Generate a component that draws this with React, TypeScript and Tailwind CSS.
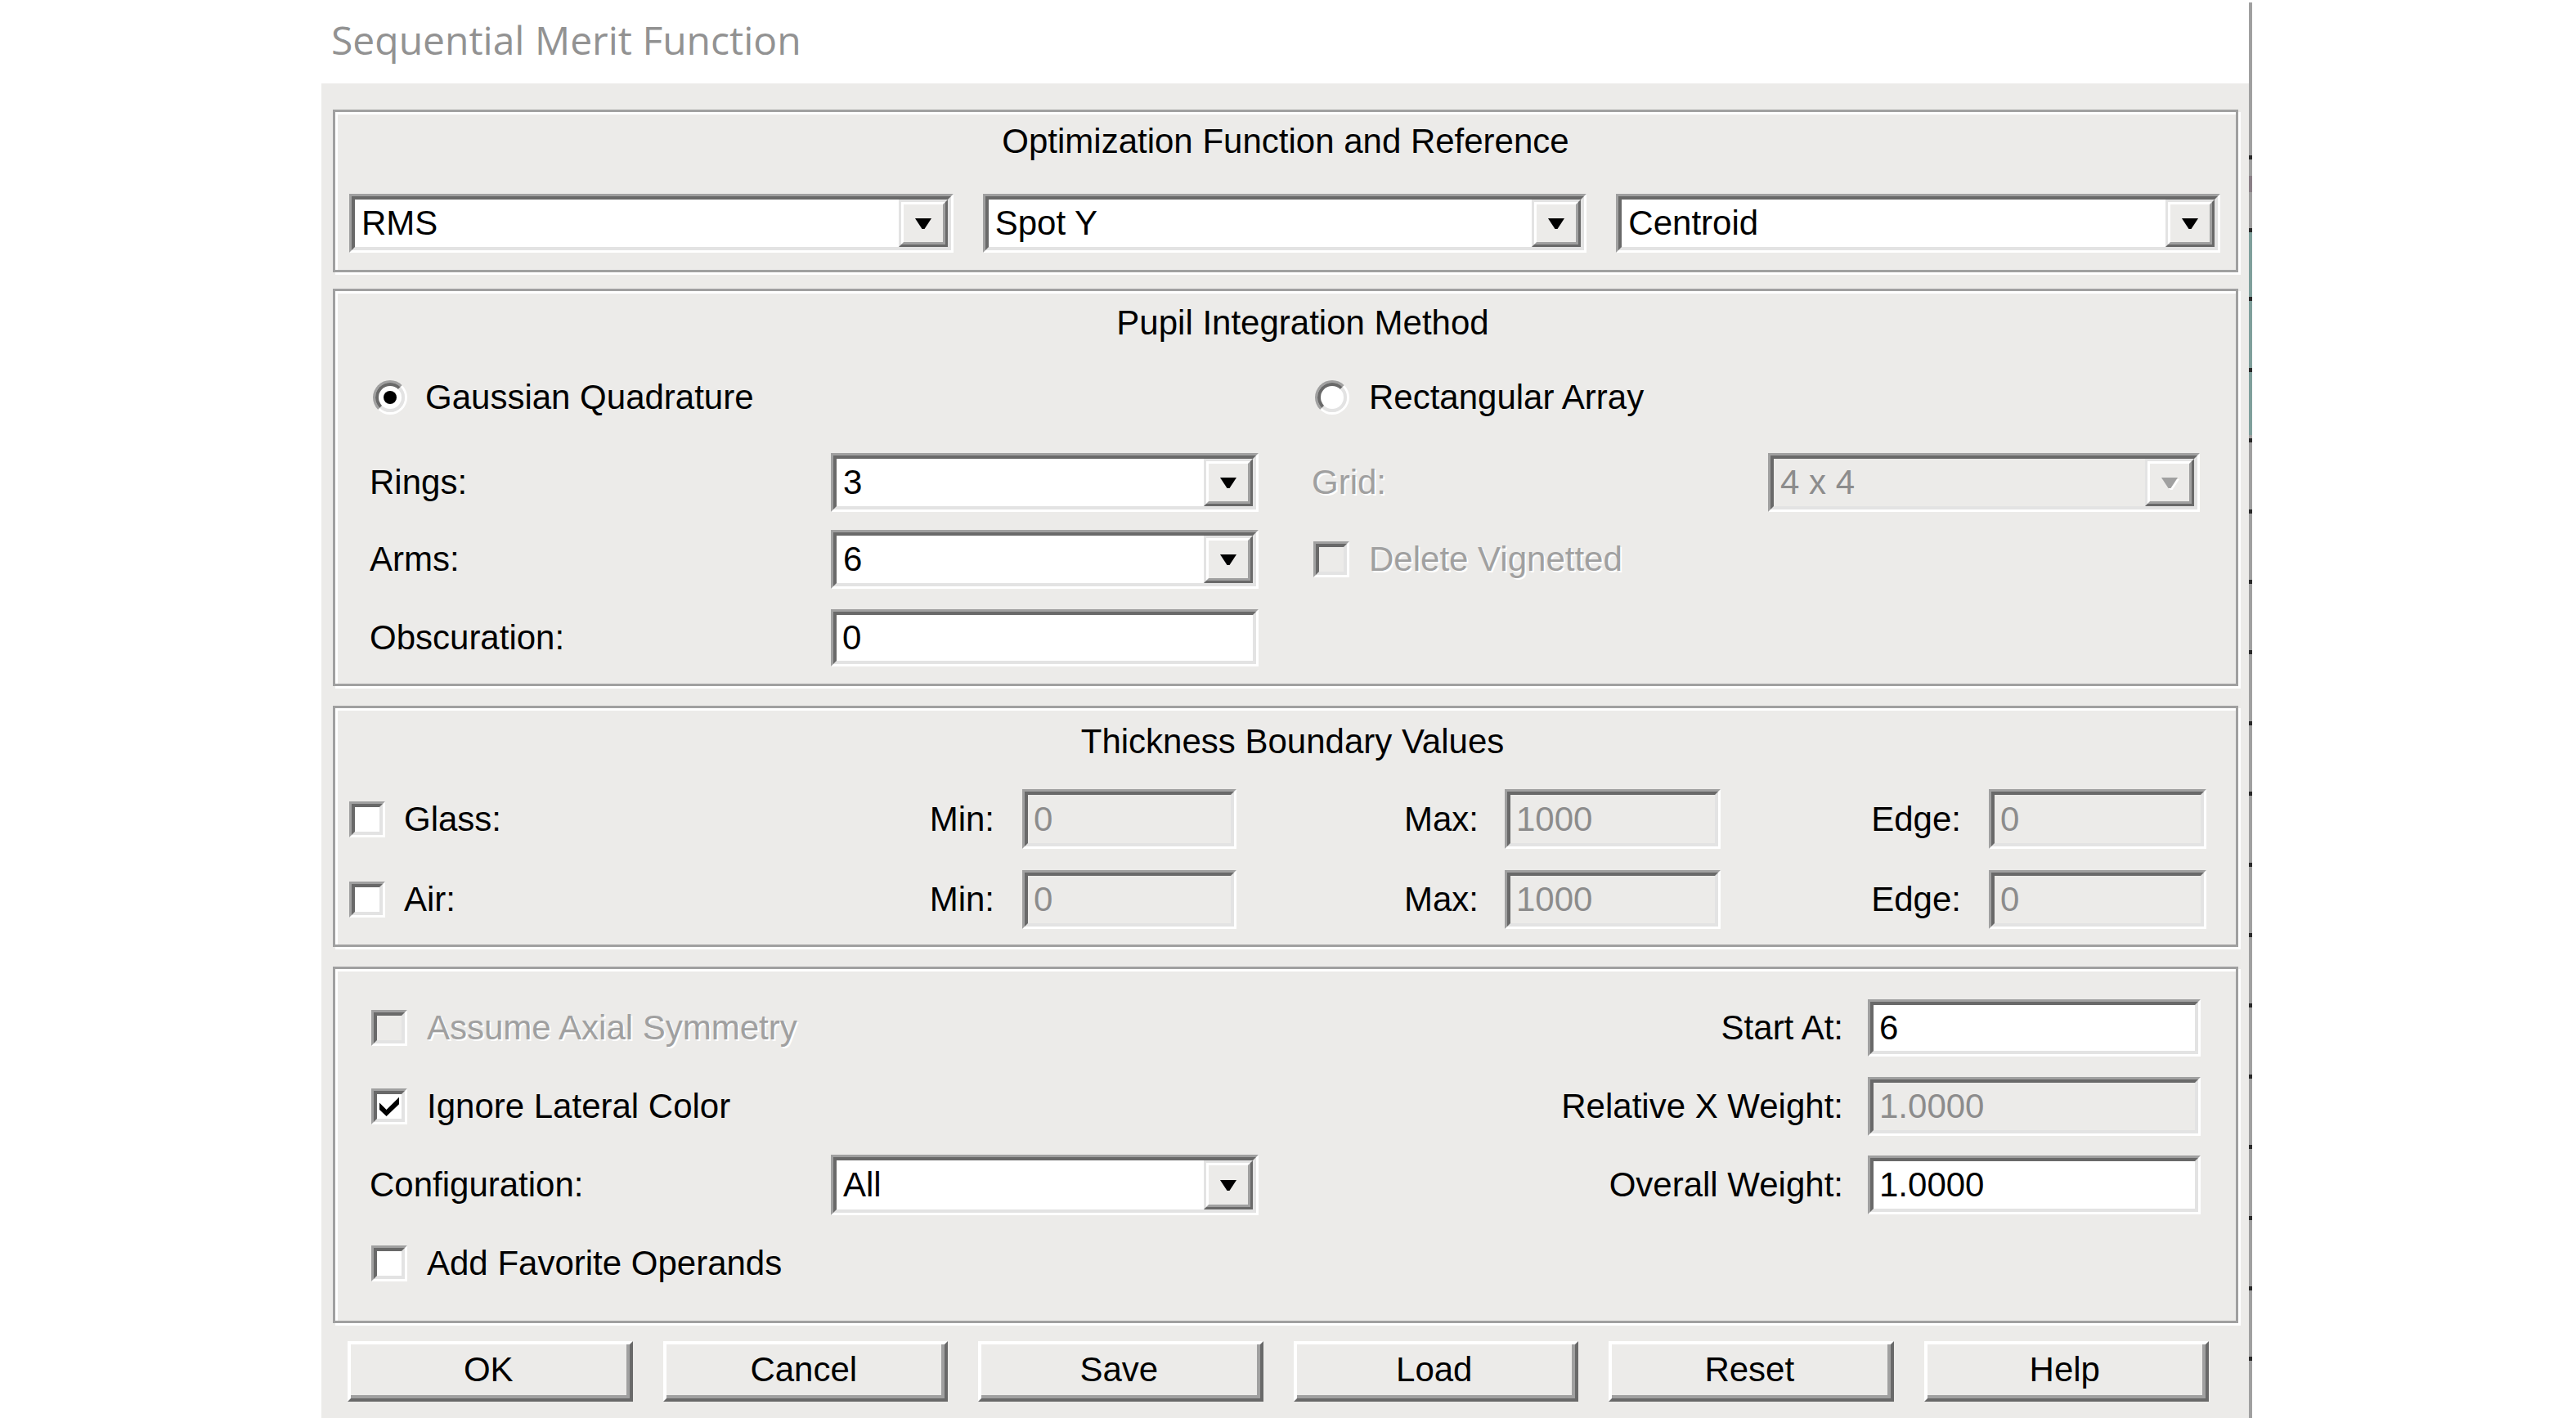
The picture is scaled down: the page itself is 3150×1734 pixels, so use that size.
import React from 'react';

const SUNKEN_OUT = 'border-[3px] border-t-[#a0a0a0] border-l-[#a0a0a0] border-b-white border-r-white';
const SUNKEN_IN = 'border-[4px] border-t-[#696969] border-l-[#696969] border-b-[#e3e3e3] border-r-[#e3e3e3]';
const DIS = 'text-[#a0a0a0] [text-shadow:2px_2px_0_#fff]';

function Arrow({ disabled }: { disabled?: boolean }) {
  return (
    <svg width="20" height="13" viewBox="0 0 20 13" className={disabled ? 'drop-shadow-[2px_2px_0_#fff]' : ''}>
      <polygon points="0,0 20,0 11.5,13 8.5,13" fill={disabled ? '#a0a0a0' : '#000'} />
    </svg>
  );
}

function Combo({ value, disabled, className = '' }: { value: string; disabled?: boolean; className?: string }) {
  return (
    <div className={`${SUNKEN_OUT} ${className}`}>
      <div className={`${SUNKEN_IN} h-full w-full flex ${disabled ? 'bg-[#ecebe9]' : 'bg-white'}`}>
        <div className={`flex-1 flex items-center pl-[8px] ${disabled ? 'text-[#8c8c8c]' : ''}`}>{value}</div>
        <div className="h-full w-[60px] border-[3px] border-t-[#e3e3e3] border-l-[#e3e3e3] border-b-[#696969] border-r-[#696969]">
          <div className="h-full w-full border-[3px] border-t-white border-l-white border-b-[#a0a0a0] border-r-[#a0a0a0] bg-[#ecebe9] flex items-center justify-center">
            <Arrow disabled={disabled} />
          </div>
        </div>
      </div>
    </div>
  );
}

function Edit({ value, disabled, className = '' }: { value: string; disabled?: boolean; className?: string }) {
  return (
    <div className={`${SUNKEN_OUT} ${className}`}>
      <div className={`${SUNKEN_IN} h-full w-full flex items-center pl-[7px] ${disabled ? 'bg-[#ecebe9] text-[#8c8c8c]' : 'bg-white'}`}>
        {value}
      </div>
    </div>
  );
}

function Radio({ checked }: { checked?: boolean }) {
  return (
    <div className="w-[42px] h-[42px] shrink-0 rounded-full border-[3px] border-t-[#a0a0a0] border-l-[#a0a0a0] border-r-white border-b-white">
      <div className="w-full h-full rounded-full border-[4px] border-t-[#696969] border-l-[#696969] border-r-[#e3e3e3] border-b-[#e3e3e3] bg-white flex items-center justify-center">
        {checked && <div className="w-[16px] h-[16px] rounded-full bg-black" />}
      </div>
    </div>
  );
}

function Check({ checked, disabled }: { checked?: boolean; disabled?: boolean }) {
  return (
    <div className={`w-[44px] h-[44px] shrink-0 ${SUNKEN_OUT}`}>
      <div className={`w-full h-full ${SUNKEN_IN} flex items-center justify-center ${disabled ? 'bg-[#ecebe9]' : 'bg-white'}`}>
        {checked && (
          <svg width="24" height="24" viewBox="0 0 7 7">
            <polygon points="0,2.2 2.5,4.7 7,0.2 7,2.7 2.5,7 0,4.7" fill="#000" />
          </svg>
        )}
      </div>
    </div>
  );
}

function Group({ title, className = '', children }: { title?: string; className?: string; children: React.ReactNode }) {
  return (
    <div className={`border-[3px] border-[#a0a0a0] shadow-[inset_3px_3px_0_#fff,3px_3px_0_#fff] flex flex-col ${className}`}>
      {title && <div className="text-center h-[42px] flex items-center justify-center">{title}</div>}
      {children}
    </div>
  );
}

function Button({ label }: { label: string }) {
  return (
    <div className="h-[74px] border-[4px] border-t-white border-l-white border-b-[#696969] border-r-[#696969]">
      <div className="h-full w-full border-b-[4px] border-r-[4px] border-b-[#a0a0a0] border-r-[#a0a0a0] bg-[#ecebe9] flex items-center justify-center">
        {label}
      </div>
    </div>
  );
}

const ticks = [187, 276, 360, 447, 533, 620, 706, 792, 879, 965, 1052, 1138, 1224, 1311, 1397, 1484, 1570, 1656];

export default function App() {
  return (
    <div className="w-[3150px] h-[1734px] bg-white flex overflow-hidden font-['Liberation_Sans',Arial,sans-serif] text-[42px] leading-none text-black">
      <div className="ml-[393px] w-[2357px] flex flex-col">
        <div className="h-[102px] flex items-center pl-[12px] pb-[4px] font-['Open_Sans',sans-serif] text-[48px] text-[#929292]">
          Sequential Merit Function
        </div>
        <div className="h-[1632px] bg-[#ecebe9] flex flex-col pt-[32px] pl-[14px] pr-[13px]">
          {/* optimization function */}
          <Group title="Optimization Function and Reference" className="h-[199px] pt-[15px]">
            <div className="grid grid-cols-3 gap-[36px] mt-[43px] pl-[17px] pr-[19px]">
              <Combo value="RMS" className="h-[72px]" />
              <Combo value="Spot Y" className="h-[72px]" />
              <Combo value="Centroid" className="h-[72px]" />
            </div>
          </Group>

          {/* pupil integration */}
          <Group title="Pupil Integration Method" className="h-[486px] mt-[20px] pt-[18px] pl-[42px]">
            <div className="flex h-[44px] mt-[48px]">
              <div className="w-[1152px] flex items-center gap-[22px] pl-[4px]">
                <Radio checked />
                <span>Gaussian Quadrature</span>
              </div>
              <div className="flex items-center gap-[24px] pl-[4px]">
                <Radio />
                <span>Rectangular Array</span>
              </div>
            </div>
            <div className="flex h-[72px] mt-[46px]">
              <div className="w-[1152px] flex items-center">
                <span className="w-[564px]">Rings:</span>
                <Combo value="3" className="w-[523px] h-full" />
              </div>
              <div className="flex items-center">
                <span className={`w-[558px] ${DIS}`}>Grid:</span>
                <Combo value="4 x 4" disabled className="w-[528px] h-full" />
              </div>
            </div>
            <div className="flex h-[72px] mt-[22px]">
              <div className="w-[1152px] flex items-center">
                <span className="w-[564px]">Arms:</span>
                <Combo value="6" className="w-[523px] h-full" />
              </div>
              <div className="flex items-center gap-[24px] pl-[2px]">
                <Check disabled />
                <span className={DIS}>Delete Vignetted</span>
              </div>
            </div>
            <div className="flex h-[70px] mt-[25px]">
              <div className="w-[1152px] flex items-center">
                <span className="w-[564px]">Obscuration:</span>
                <Edit value="0" className="w-[523px] h-full" />
              </div>
            </div>
          </Group>

          {/* thickness boundary */}
          <Group title="Thickness Boundary Values" className="h-[295px] mt-[24px] pt-[20px] pl-[17px]">
            {[
              ['Glass:', 'mt-[37px] h-[73px]'],
              ['Air:', 'mt-[26px] h-[72px]'],
            ].map(([label, cls]) => (
              <div key={label} className={`flex items-center ${cls}`}>
                <div className="w-[789px] flex items-center justify-between">
                  <div className="flex items-center gap-[23px]">
                    <Check />
                    <span>{label}</span>
                  </div>
                  <span>Min:</span>
                </div>
                <Edit value="0" disabled className="ml-[34px] w-[262px] h-full" />
                <span className="w-[296px] text-right">Max:</span>
                <Edit value="1000" disabled className="ml-[32px] w-[264px] h-full" />
                <span className="w-[294px] text-right">Edge:</span>
                <Edit value="0" disabled className="ml-[34px] w-[266px] h-full" />
              </div>
            ))}
          </Group>

          {/* misc options */}
          <Group className="h-[436px] mt-[24px] pt-[36px] pl-[42px] pr-[43px]">
            <div className="flex flex-col gap-[24px]">
              <div className="flex h-[72px] items-center justify-between">
                <div className="flex items-center gap-[24px] pl-[2px]">
                  <Check disabled />
                  <span className={DIS}>Assume Axial Symmetry</span>
                </div>
                <div className="flex items-center h-full">
                  <span>Start At:</span>
                  <Edit value="6" className="ml-[30px] w-[407px] h-[70px]" />
                </div>
              </div>
              <div className="flex h-[72px] items-center justify-between">
                <div className="flex items-center gap-[24px] pl-[2px]">
                  <Check checked />
                  <span>Ignore Lateral Color</span>
                </div>
                <div className="flex items-center h-full">
                  <span>Relative X Weight:</span>
                  <Edit value="1.0000" disabled className="ml-[30px] w-[407px] h-[72px]" />
                </div>
              </div>
              <div className="flex h-[72px] items-center justify-between">
                <div className="flex items-center h-full">
                  <span className="w-[564px]">Configuration:</span>
                  <Combo value="All" className="w-[523px] h-[74px]" />
                </div>
                <div className="flex items-center h-full">
                  <span>Overall Weight:</span>
                  <Edit value="1.0000" className="ml-[30px] w-[407px] h-[72px]" />
                </div>
              </div>
              <div className="flex h-[72px] items-center">
                <div className="flex items-center gap-[24px] pl-[2px]">
                  <Check />
                  <span>Add Favorite Operands</span>
                </div>
              </div>
            </div>
          </Group>

          <div className="grid grid-cols-6 gap-[37px] mt-[22px] ml-[18px] w-[2276px]">
            {['OK', 'Cancel', 'Save', 'Load', 'Reset', 'Help'].map((b) => (
              <Button key={b} label={b} />
            ))}
          </div>
        </div>
      </div>
      <div className="relative mt-[3px] w-[4px] h-[1731px] bg-[#a0a0a0] flex flex-col">
        <div className="h-[212px]" />
        <div className="h-[20px] bg-[#8a7f86]" />
        <div className="h-[45px]" />
        <div className="h-[252px] bg-[#7f9f9b]" />
        {ticks.map((t) => (
          <div key={t} className="absolute left-0 w-[4px] h-[5px] bg-[#2a2a2a]" style={{ top: t }} />
        ))}
      </div>
    </div>
  );
}
